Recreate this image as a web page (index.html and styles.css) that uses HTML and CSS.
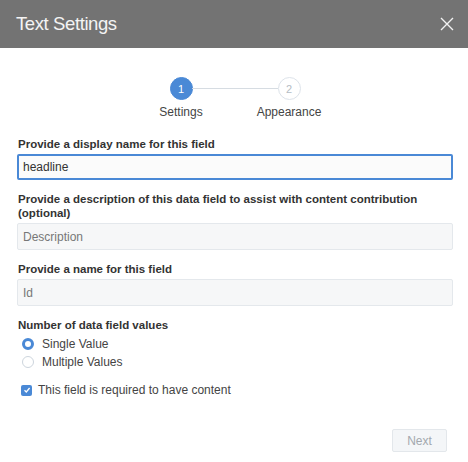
FILE: index.html
```html
<!DOCTYPE html>
<html>
<head>
<meta charset="utf-8">
<link rel="stylesheet" href="styles.css">
</head>
<body>
<div class="dialog">
  <header class="header">
    <h1 class="title">Text Settings</h1>
    <svg class="close" width="14" height="14" viewBox="0 0 14 14"><path d="M1 1L13 13M13 1L1 13" stroke="#f2f2f2" stroke-width="1.4" fill="none"/></svg>
  </header>
  <div class="steps">
    <div class="step">
      <span class="circle active">1</span>
      <span class="step-label">Settings</span>
    </div>
    <div class="line"></div>
    <div class="step">
      <span class="circle">2</span>
      <span class="step-label">Appearance</span>
    </div>
  </div>
  <form class="form">
    <div class="field">
      <label class="label">Provide a display name for this field</label>
      <div class="input focus">headline</div>
    </div>
    <div class="field">
      <label class="label">Provide a description of this data field to assist with content contribution (optional)</label>
      <div class="input placeholder">Description</div>
    </div>
    <div class="field">
      <label class="label">Provide a name for this field</label>
      <div class="input placeholder">Id</div>
    </div>
    <div class="field radios">
      <label class="label">Number of data field values</label>
      <div class="radio-row"><span class="radio checked"></span><span class="opt">Single Value</span></div>
      <div class="radio-row"><span class="radio"></span><span class="opt">Multiple Values</span></div>
    </div>
    <div class="check-row">
      <span class="checkbox"><svg width="8" height="8" viewBox="0 0 8 8"><path d="M1.5 4.2L3.3 6L6.6 2" stroke="#fff" stroke-width="1.3" fill="none"/></svg></span>
      <span class="opt">This field is required to have content</span>
    </div>
  </form>
  <div class="footer">
    <button class="next" type="button">Next</button>
  </div>
</div>
</body>
</html>
```
FILE: styles.css
```css
* { box-sizing: border-box; }
html, body { margin: 0; padding: 0; background: #fff; }
body { font-family: "Liberation Sans", Arial, sans-serif; color: #333; width: 468px; height: 462px; overflow: hidden; }
.dialog { width: 468px; height: 462px; display: flex; flex-direction: column; }
.header { height: 48px; background: #737373; display: flex; align-items: center; justify-content: space-between; padding: 0 14px 0 16px; }
.title { margin: 0; font-size: 18.5px; font-weight: 300; color: #f4f4f4; letter-spacing: -0.4px; }
.close { display: block; }
.steps { display: flex; justify-content: center; align-items: flex-start; padding-top: 29px; padding-left: 2px; }
.step { display: flex; flex-direction: column; align-items: center; width: 60px; }
.circle { width: 23px; height: 23px; border-radius: 50%; border: 1.5px solid #dde3ea; color: #b4bcc4; font-size: 11px; display: flex; align-items: center; justify-content: center; background: #fff; }
.circle.active { background: #4a89d6; border-color: #4a89d6; color: #fff; }
.step-label { margin-top: 5px; font-size: 12px; color: #444; }
.line { width: 86px; height: 1px; background: #d6dce2; margin: 11px -19px 0; }
.form { padding: 18px 15px 0 17px; display: flex; flex-direction: column; }
.field { display: flex; flex-direction: column; margin-bottom: 12px; }
.label { font-size: 11.5px; font-weight: bold; color: #333; line-height: 14px; margin-bottom: 3px; padding-left: 1px; }
.input { height: 27px; border: 1px solid #e4e8ec; background: #f6f7f8; font-size: 12px; color: #333; padding: 0 5px; display: flex; align-items: center; border-radius: 2px; }
.input.focus { border: 2px solid #4a89d6; background: #fbfbfb; padding-left: 4px; height: 26px; }
.input.placeholder { color: #777; }
.radios { margin-bottom: 10px; }
.radios .label { margin-bottom: 3px; }
.radio-row { display: flex; align-items: center; height: 18px; padding-left: 5px; }
.radio { width: 12px; height: 12px; border-radius: 50%; border: 1px solid #cdd5dd; background: #fff; margin-right: 8px; }
.radio.checked { border: 3.5px solid #4a89d6; background: #fff; }
.opt { font-size: 12px; color: #444; }
.check-row { display: flex; align-items: center; padding-left: 4px; height: 18px; }
.checkbox { width: 11px; height: 11px; border-radius: 2px; background: #4a89d6; margin-right: 6px; display: flex; align-items: center; justify-content: center; }
.checkbox svg { display: block; }
.footer { margin-top: auto; display: flex; justify-content: flex-end; padding: 0 21px 10px 0; }
.next { width: 55px; height: 23px; border: 1px solid #e3e7eb; background: #f4f6f8; color: #a3a8ae; font-family: "Liberation Sans", Arial, sans-serif; font-size: 12px; border-radius: 2px; padding: 0; }
```
